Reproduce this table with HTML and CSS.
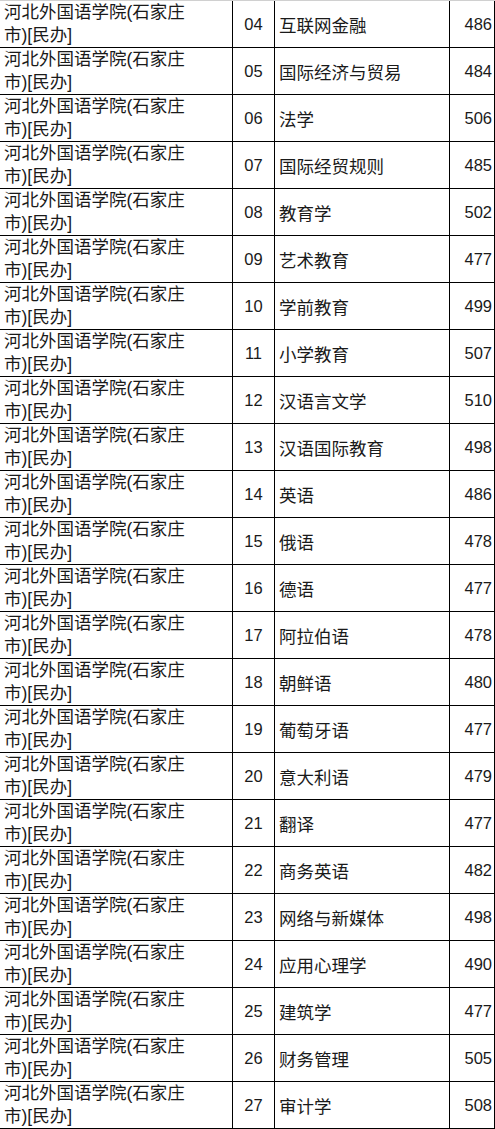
FILE: index.html
```html
<!DOCTYPE html>
<html lang="zh">
<head>
<meta charset="utf-8">
<title>河北外国语学院 专业分数</title>
<link rel="stylesheet" href="styles.css">
</head>
<body>
<div class="sheet">
  <div class="row"><div class="c school">河北外国语学院(石家庄<br>市)[民办]</div><div class="c code">04</div><div class="c major">互联网金融</div><div class="c score">486</div></div>
  <div class="row"><div class="c school">河北外国语学院(石家庄<br>市)[民办]</div><div class="c code">05</div><div class="c major">国际经济与贸易</div><div class="c score">484</div></div>
  <div class="row"><div class="c school">河北外国语学院(石家庄<br>市)[民办]</div><div class="c code">06</div><div class="c major">法学</div><div class="c score">506</div></div>
  <div class="row"><div class="c school">河北外国语学院(石家庄<br>市)[民办]</div><div class="c code">07</div><div class="c major">国际经贸规则</div><div class="c score">485</div></div>
  <div class="row"><div class="c school">河北外国语学院(石家庄<br>市)[民办]</div><div class="c code">08</div><div class="c major">教育学</div><div class="c score">502</div></div>
  <div class="row"><div class="c school">河北外国语学院(石家庄<br>市)[民办]</div><div class="c code">09</div><div class="c major">艺术教育</div><div class="c score">477</div></div>
  <div class="row"><div class="c school">河北外国语学院(石家庄<br>市)[民办]</div><div class="c code">10</div><div class="c major">学前教育</div><div class="c score">499</div></div>
  <div class="row"><div class="c school">河北外国语学院(石家庄<br>市)[民办]</div><div class="c code">11</div><div class="c major">小学教育</div><div class="c score">507</div></div>
  <div class="row"><div class="c school">河北外国语学院(石家庄<br>市)[民办]</div><div class="c code">12</div><div class="c major">汉语言文学</div><div class="c score">510</div></div>
  <div class="row"><div class="c school">河北外国语学院(石家庄<br>市)[民办]</div><div class="c code">13</div><div class="c major">汉语国际教育</div><div class="c score">498</div></div>
  <div class="row"><div class="c school">河北外国语学院(石家庄<br>市)[民办]</div><div class="c code">14</div><div class="c major">英语</div><div class="c score">486</div></div>
  <div class="row"><div class="c school">河北外国语学院(石家庄<br>市)[民办]</div><div class="c code">15</div><div class="c major">俄语</div><div class="c score">478</div></div>
  <div class="row"><div class="c school">河北外国语学院(石家庄<br>市)[民办]</div><div class="c code">16</div><div class="c major">德语</div><div class="c score">477</div></div>
  <div class="row"><div class="c school">河北外国语学院(石家庄<br>市)[民办]</div><div class="c code">17</div><div class="c major">阿拉伯语</div><div class="c score">478</div></div>
  <div class="row"><div class="c school">河北外国语学院(石家庄<br>市)[民办]</div><div class="c code">18</div><div class="c major">朝鲜语</div><div class="c score">480</div></div>
  <div class="row"><div class="c school">河北外国语学院(石家庄<br>市)[民办]</div><div class="c code">19</div><div class="c major">葡萄牙语</div><div class="c score">477</div></div>
  <div class="row"><div class="c school">河北外国语学院(石家庄<br>市)[民办]</div><div class="c code">20</div><div class="c major">意大利语</div><div class="c score">479</div></div>
  <div class="row"><div class="c school">河北外国语学院(石家庄<br>市)[民办]</div><div class="c code">21</div><div class="c major">翻译</div><div class="c score">477</div></div>
  <div class="row"><div class="c school">河北外国语学院(石家庄<br>市)[民办]</div><div class="c code">22</div><div class="c major">商务英语</div><div class="c score">482</div></div>
  <div class="row"><div class="c school">河北外国语学院(石家庄<br>市)[民办]</div><div class="c code">23</div><div class="c major">网络与新媒体</div><div class="c score">498</div></div>
  <div class="row"><div class="c school">河北外国语学院(石家庄<br>市)[民办]</div><div class="c code">24</div><div class="c major">应用心理学</div><div class="c score">490</div></div>
  <div class="row"><div class="c school">河北外国语学院(石家庄<br>市)[民办]</div><div class="c code">25</div><div class="c major">建筑学</div><div class="c score">477</div></div>
  <div class="row"><div class="c school">河北外国语学院(石家庄<br>市)[民办]</div><div class="c code">26</div><div class="c major">财务管理</div><div class="c score">505</div></div>
  <div class="row"><div class="c school">河北外国语学院(石家庄<br>市)[民办]</div><div class="c code">27</div><div class="c major">审计学</div><div class="c score">508</div></div>
</div>
</body>
</html>
```

FILE: styles.css
```css
html, body {
  margin: 0;
  padding: 0;
  background: #ffffff;
}

.sheet {
  width: 495px;
  border-top: 1px solid #d0d0d0;
  font-family: "Liberation Sans", "Noto Sans CJK SC", sans-serif;
  font-size: 17.5px;
  color: #1a1a1a;
}

.row {
  display: grid;
  grid-template-columns: 233px 42px 175px 45px;
  height: 47px;
  box-sizing: border-box;
  border-bottom: 1px solid #000;
}

.c {
  box-sizing: border-box;
  border-right: 1px solid #000;
  display: flex;
  align-items: center;
  white-space: nowrap;
}

.school {
  padding-left: 4px;
  line-height: 23px;
  display: block;
}

.code {
  justify-content: center;
  font-size: 16.5px;
}

.major {
  padding-left: 4px;
}

.score {
  justify-content: flex-end;
  padding-right: 2px;
  font-size: 16.5px;
}
```
